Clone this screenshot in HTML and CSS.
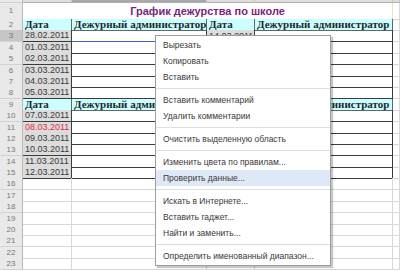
FILE: index.html
```html
<!DOCTYPE html>
<html>
<head>
    <meta charset="utf-8">
    <title>График дежурства</title>
    <link rel="stylesheet" href="styles.css">
</head>
<body>
<div class="sheet">
    <div class="row top">
        <div class="rh"></div><div class="ch"></div><div class="ch sel"></div><div class="ch"></div><div class="ch"></div><div class="ch"></div>
    </div>
    <div class="row r1">
        <div class="rh">1</div><div class="c title">График дежурства по школе</div><div class="c"></div>
    </div>
    <div class="row">
        <div class="rh">2</div><div class="c hd">Дата</div><div class="c hd">Дежурный администратор</div><div class="c hd">Дата</div><div class="c hd">Дежурный администратор</div><div class="c"></div>
    </div>
    <div class="row">
        <div class="rh cur">3</div><div class="c t dt">28.02.2011</div><div class="c t active"></div><div class="c t dt low">14.03.2011</div><div class="c t"></div><div class="c"></div>
    </div>
    <div class="row">
        <div class="rh">4</div><div class="c t dt">01.03.2011</div><div class="c t"></div><div class="c t"></div><div class="c t"></div><div class="c"></div>
    </div>
    <div class="row">
        <div class="rh">5</div><div class="c t dt">02.03.2011</div><div class="c t"></div><div class="c t"></div><div class="c t"></div><div class="c"></div>
    </div>
    <div class="row">
        <div class="rh">6</div><div class="c t dt">03.03.2011</div><div class="c t"></div><div class="c t"></div><div class="c t"></div><div class="c"></div>
    </div>
    <div class="row">
        <div class="rh">7</div><div class="c t dt">04.03.2011</div><div class="c t"></div><div class="c t"></div><div class="c t"></div><div class="c"></div>
    </div>
    <div class="row">
        <div class="rh">8</div><div class="c t dt">05.03.2011</div><div class="c t"></div><div class="c t"></div><div class="c t"></div><div class="c"></div>
    </div>
    <div class="row">
        <div class="rh">9</div><div class="c hd">Дата</div><div class="c hd">Дежурный админи</div><div class="c hd">Дата</div><div class="c hd">Дежурный администратор</div><div class="c"></div>
    </div>
    <div class="row">
        <div class="rh">10</div><div class="c t dt">07.03.2011</div><div class="c t"></div><div class="c t"></div><div class="c t"></div><div class="c"></div>
    </div>
    <div class="row">
        <div class="rh">11</div><div class="c t dt red">08.03.2011</div><div class="c t"></div><div class="c t"></div><div class="c t"></div><div class="c"></div>
    </div>
    <div class="row">
        <div class="rh">12</div><div class="c t dt">09.03.2011</div><div class="c t"></div><div class="c t"></div><div class="c t"></div><div class="c"></div>
    </div>
    <div class="row">
        <div class="rh">13</div><div class="c t dt">10.03.2011</div><div class="c t"></div><div class="c t"></div><div class="c t"></div><div class="c"></div>
    </div>
    <div class="row">
        <div class="rh">14</div><div class="c t dt">11.03.2011</div><div class="c t"></div><div class="c t"></div><div class="c t"></div><div class="c"></div>
    </div>
    <div class="row">
        <div class="rh">15</div><div class="c t dt">12.03.2011</div><div class="c t"></div><div class="c t"></div><div class="c t"></div><div class="c"></div>
    </div>
    <div class="row"><div class="rh">16</div><div class="c"></div><div class="c"></div><div class="c"></div><div class="c"></div><div class="c"></div></div>
    <div class="row"><div class="rh">17</div><div class="c"></div><div class="c"></div><div class="c"></div><div class="c"></div><div class="c"></div></div>
    <div class="row"><div class="rh">18</div><div class="c"></div><div class="c"></div><div class="c"></div><div class="c"></div><div class="c"></div></div>
    <div class="row"><div class="rh">19</div><div class="c"></div><div class="c"></div><div class="c"></div><div class="c"></div><div class="c"></div></div>
    <div class="row"><div class="rh">20</div><div class="c"></div><div class="c"></div><div class="c"></div><div class="c"></div><div class="c"></div></div>
    <div class="row"><div class="rh">21</div><div class="c"></div><div class="c"></div><div class="c"></div><div class="c"></div><div class="c"></div></div>
    <div class="row"><div class="rh">22</div><div class="c"></div><div class="c"></div><div class="c"></div><div class="c"></div><div class="c"></div></div>
    <div class="row"><div class="rh">23</div><div class="c"></div><div class="c"></div><div class="c"></div><div class="c"></div><div class="c"></div></div>

    <div class="menu">
        <div class="item">Вырезать</div>
        <div class="item">Копировать</div>
        <div class="item">Вставить</div>
        <div class="sep"></div>
        <div class="item">Вставить комментарий</div>
        <div class="item">Удалить комментарии</div>
        <div class="sep"></div>
        <div class="item">Очистить выделенную область</div>
        <div class="sep"></div>
        <div class="item">Изменить цвета по правилам...</div>
        <div class="item hl">Проверить данные...</div>
        <div class="sep"></div>
        <div class="item">Искать в Интернете...</div>
        <div class="item">Вставить гаджет...</div>
        <div class="item">Найти и заменить...</div>
        <div class="sep"></div>
        <div class="item">Определить именованный диапазон...</div>
    </div>
</div>
</body>
</html>
```

FILE: styles.css
```css
body {
    margin: 0;
    background: #fff;
    font-family: "Liberation Sans", Arial, sans-serif;
}

.sheet {
    position: relative;
    width: 400px;
    height: 271px;
    overflow: hidden;
}

.row {
    display: grid;
    grid-template-columns: 23px 49px 135px 48px 138px 7px;
    height: 11.4px;
}

.row.top {
    height: 3px;
}

.row.r1 {
    height: 16px;
}

.rh {
    box-sizing: border-box;
    background: #e9e9e9;
    border-right: 1px solid #b8b8b8;
    border-bottom: 1px solid #d2d2d2;
    color: #777;
    font-size: 8px;
    line-height: 11px;
    text-align: center;
}

.r1 .rh {
    line-height: 16px;
}

.rh.cur {
    background: #c6c6c6;
}

.ch {
    box-sizing: border-box;
    background: #dedede;
    border-right: 1px solid #c4c4c4;
    border-bottom: 1px solid #b0b0b0;
}

.ch.sel {
    background: #a9a9a9;
}

.c {
    box-sizing: border-box;
    border-right: 1px solid #d8d8d8;
    border-bottom: 1px solid #d8d8d8;
    font-size: 9px;
    line-height: 11px;
    padding-left: 2px;
    white-space: nowrap;
    overflow: hidden;
    color: #333;
}

.title {
    grid-column: 2 / 6;
    padding: 0;
    text-align: center;
    font-size: 11px;
    font-weight: bold;
    line-height: 16px;
    color: #7a1f7a;
    border-right-color: #f0e6a8;
}

.hd {
    background: #ccffff;
    border-color: #5a6a6a;
    font-family: "Liberation Serif", "Times New Roman", serif;
    font-weight: bold;
    font-size: 11px;
    line-height: 11px;
    color: #1e2a2a;
}

.t {
    border-color: #3c3c3c;
}

.dt {
    background: #dcdcdc;
    color: #3a3a3a;
}

.dt.red {
    color: #e0303a;
}

.dt.low {
    line-height: 13px;
}

.active {
    border-bottom: 1px solid #3d5ec8;
}

.menu {
    position: absolute;
    left: 155px;
    top: 35px;
    width: 176px;
    box-sizing: border-box;
    padding: 1px 0;
    background: #fff;
    border: 1px solid #9c9c9c;
    box-shadow: 2px 2px 1px rgba(0, 0, 0, 0.22);
}

.item {
    height: 16px;
    line-height: 16px;
    padding-left: 7px;
    font-size: 8.5px;
    color: #3a3a3a;
    white-space: nowrap;
}

.item.hl {
    background: #dfe8f6;
}

.sep {
    height: 1px;
    margin: 3px 0;
    background: #e0e0e0;
}
```
